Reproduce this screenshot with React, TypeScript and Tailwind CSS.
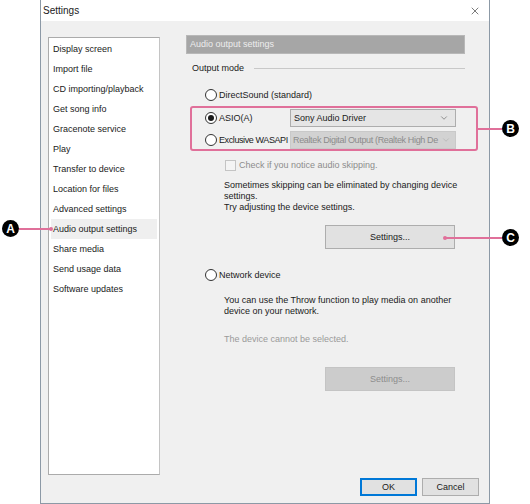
import { X, ChevronDown } from "lucide-react";

const navItems = [
  "Display screen",
  "Import file",
  "CD importing/playback",
  "Get song info",
  "Gracenote service",
  "Play",
  "Transfer to device",
  "Location for files",
  "Advanced settings",
  "Audio output settings",
  "Share media",
  "Send usage data",
  "Software updates",
];

function Radio({ checked, label, tight }: { checked?: boolean; label: string; tight?: boolean }) {
  return (
    <div className="flex items-center gap-[2px] whitespace-nowrap">
      <span className="flex h-[12px] w-[12px] shrink-0 items-center justify-center rounded-full border border-[#333] bg-white">
        {checked && <span className="h-[6px] w-[6px] rounded-full bg-[#1a1a1a]" />}
      </span>
      <span className={tight ? "tracking-[-0.4px]" : ""}>{label}</span>
    </div>
  );
}

function Badge({ letter }: { letter: string }) {
  return (
    <span className="flex h-[17px] w-[17px] items-center justify-center rounded-full bg-black text-[12px] font-bold leading-none text-white">
      {letter}
    </span>
  );
}

export default function App() {
  return (
    <div
      className="relative h-[504px] w-[530px] overflow-hidden bg-white text-[9px] leading-[11px] text-[#1a1a1a]"
      style={{ fontFamily: '"Liberation Sans", Arial, sans-serif' }}
    >
      {/* dialog window */}
      <div className="ml-[40px] flex h-[504px] w-[450px] flex-col border-x border-b border-[#8c99a6]">
        <div className="flex h-[21px] items-center justify-between bg-white pl-[2px] pr-[8px]">
          <span className="text-[10px]">Settings</span>
          <X size={12} strokeWidth={1.2} className="text-[#222]" />
        </div>

        <div className="flex flex-1 flex-col bg-[#f0f0f0] pb-[7px]">
          <div className="flex pl-[7px] pt-[14px]">
            {/* category list */}
            <div className="mt-[2px] h-[438px] w-[112px] border border-[#ababab] border-r-[#c4c4c4] bg-white px-[2px] pt-[1px]">
              {navItems.map((item) => (
                <div
                  key={item}
                  className={`flex h-[20px] items-center px-[2px] ${
                    item === "Audio output settings" ? "bg-[#efefef]" : ""
                  }`}
                >
                  {item}
                </div>
              ))}
            </div>

            {/* settings pane */}
            <div className="ml-[26px] flex w-[279px] flex-col">
              <div className="flex h-[19px] items-center border border-[#b8b8b8] bg-[#a6a6a6] px-[3px] text-[#ededed]">
                Audio output settings
              </div>

              <div className="mt-[8px] flex h-[12px] items-center pl-[6px]">
                <span>Output mode</span>
                <span className="ml-[10px] h-px flex-1 bg-[#c8c8c8]" />
              </div>

              <div className="mt-[15px] h-[14px] pl-[19px]">
                <Radio label="DirectSound (standard)" />
              </div>

              <div className="mt-[6px] flex h-[18px] items-center pl-[19px]">
                <div className="w-[85px] shrink-0">
                  <Radio checked label="ASIO(A)" />
                </div>
                <div className="flex h-[18px] w-[166px] shrink-0 items-center justify-between border border-[#adadad] bg-[#e5e5e5] pl-[3px] pr-[6px]">
                  <span>Sony Audio Driver</span>
                  <ChevronDown size={10} strokeWidth={1.3} className="text-[#444]" />
                </div>
              </div>

              <div className="mt-[4px] flex h-[18px] items-center pl-[19px]">
                <div className="w-[85px] shrink-0">
                  <Radio tight label="Exclusive WASAPI" />
                </div>
                <div className="flex h-[18px] w-[166px] shrink-0 items-center justify-between border border-[#c9c9c9] bg-[#d2d2d2] pl-[2px] pr-[4px] text-[#8c8c8c]">
                  <span className="whitespace-nowrap tracking-[-0.35px]">
                    Realtek Digital Output (Realtek High De
                  </span>
                  <ChevronDown size={10} strokeWidth={1.3} className="shrink-0 text-[#a8a8a8]" />
                </div>
              </div>

              <div className="mt-[10px] flex h-[12px] items-center gap-[3px] pl-[39px] text-[#8c8c8c]">
                <span className="h-[11px] w-[11px] border border-[#c4c4c4] bg-[#f4f4f4]" />
                <span>Check if you notice audio skipping.</span>
              </div>

              <div className="mt-[9px] pl-[38px]">
                <p>Sometimes skipping can be eliminated by changing device</p>
                <p>settings.</p>
                <p>Try adjusting the device settings.</p>
              </div>

              <div className="mt-[12px] flex justify-end pr-[10px]">
                <div className="flex h-[24px] w-[130px] items-center justify-center border border-[#adadad] bg-[#e1e1e1]">
                  Settings...
                </div>
              </div>

              <div className="mt-[20px] h-[14px] pl-[19px]">
                <Radio label="Network device" />
              </div>

              <div className="mt-[12px] pl-[38px]">
                <p>You can use the Throw function to play media on another</p>
                <p>device on your network.</p>
              </div>

              <p className="mt-[17px] pl-[38px] text-[#9a9a9a]">The device cannot be selected.</p>

              <div className="mt-[22px] flex justify-end pr-[10px]">
                <div className="flex h-[24px] w-[130px] items-center justify-center border border-[#c4c4c4] bg-[#cccccc] text-[#8c8c8c]">
                  Settings...
                </div>
              </div>
            </div>
          </div>

          <div className="mt-auto flex justify-end gap-[5px] pr-[10px]">
            <div className="flex h-[18px] w-[57px] items-center justify-center border-2 border-[#0078d7] bg-[#e1e1e1]">
              OK
            </div>
            <div className="flex h-[18px] w-[57px] items-center justify-center border border-[#adadad] bg-[#e1e1e1]">
              Cancel
            </div>
          </div>
        </div>
      </div>

      {/* callout A */}
      <div className="absolute left-[2px] top-[220px] flex items-center">
        <Badge letter="A" />
        <span className="h-[2px] w-[32px] bg-[#e0709a]" />
        <span className="-ml-[2px] h-[4px] w-[4px] rounded-full bg-[#e0709a]" />
      </div>

      {/* callout B */}
      <div className="absolute left-[190px] top-[106px] h-[45px] w-[288px] rounded-[3px] border-2 border-[#e0709a]" />
      <div className="absolute left-[477px] top-[120px] flex items-center">
        <span className="h-[2px] w-[25px] bg-[#e0709a]" />
        <Badge letter="B" />
      </div>

      {/* callout C */}
      <div className="absolute left-[443px] top-[229px] flex items-center">
        <span className="h-[4px] w-[4px] rounded-full bg-[#e0709a]" />
        <span className="-ml-[1px] h-[2px] w-[56px] bg-[#e0709a]" />
        <Badge letter="C" />
      </div>
    </div>
  );
}
